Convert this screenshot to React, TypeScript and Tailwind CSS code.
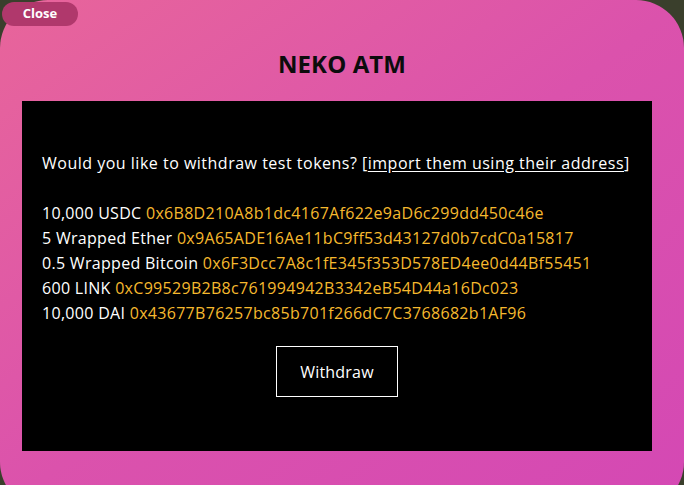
export default function App() {
  const tokens = [
    { label: "10,000 USDC", address: "0x6B8D210A8b1dc4167Af622e9aD6c299dd450c46e" },
    { label: "5 Wrapped Ether", address: "0x9A65ADE16Ae11bC9ff53d43127d0b7cdC0a15817" },
    { label: "0.5 Wrapped Bitcoin", address: "0x6F3Dcc7A8c1fE345f353D578ED4ee0d44Bf55451" },
    { label: "600 LINK", address: "0xC99529B2B8c761994942B3342eB54D44a16Dc023" },
    { label: "10,000 DAI", address: "0x43677B76257bc85b701f266dC7C3768682b1AF96" },
  ];

  return (
    <div className="relative h-[485px] w-[684px] overflow-hidden bg-[#3a3f2c] font-['Open_Sans',sans-serif]">
      <div className="flex h-[510px] w-[684px] flex-col items-center rounded-[48px] bg-gradient-to-br from-[#e8659a] via-[#db52ac] to-[#d448b4] pl-[22px] pr-[32px]">
        <h1 className="ml-[10px] mt-[49px] text-[24px] font-bold leading-[30px] tracking-[0.1px] text-[#0c0c0c]">NEKO ATM</h1>
        <div className="mt-[22px] flex h-[350px] w-full flex-col bg-black px-5 pt-[50px] text-[16px] tracking-[0.3px] text-white">
          <p className="leading-[25px] tracking-[0.5px]">
            Would you like to withdraw test tokens?{" "}
            <span>
              [<span className="underline underline-offset-2">import them using their address</span>]
            </span>
          </p>
          <div className="mt-[25px] flex flex-col leading-[25px]">
            {tokens.map((t) => (
              <div key={t.label}>
                {t.label} <span className="text-[#f6b92e]">{t.address}</span>
              </div>
            ))}
          </div>
          <button className="mx-auto mt-[20px] h-[51px] w-[122px] border border-white text-[16px] tracking-[0.2px] text-white">
            Withdraw
          </button>
        </div>
      </div>
      <button className="absolute left-[2px] top-[2px] h-[24px] w-[76px] rounded-full bg-[#b0386c] text-[13px] font-bold text-white">
        Close
      </button>
    </div>
  );
}
